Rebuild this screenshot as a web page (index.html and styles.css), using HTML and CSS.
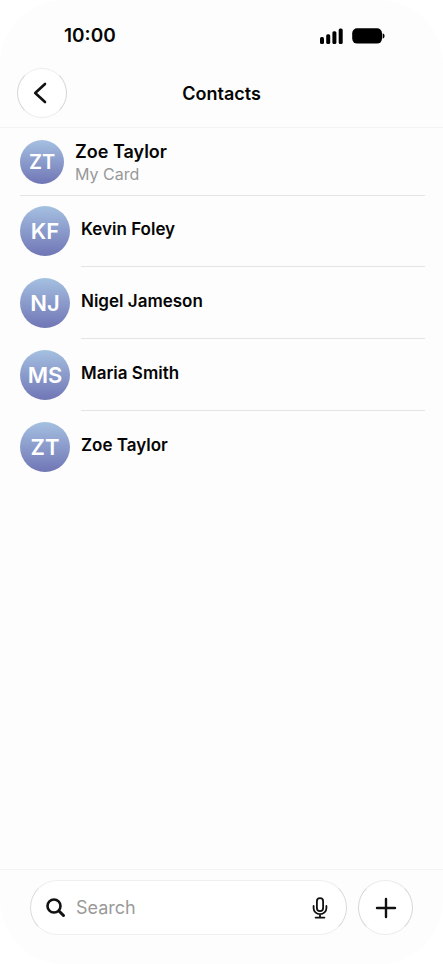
FILE: index.html
```html
<!DOCTYPE html>
<html lang="en">
<head>
<meta charset="utf-8">
<meta name="viewport" content="width=device-width, initial-scale=1">
<title>Contacts</title>
<link rel="stylesheet" href="styles.css">
</head>
<body>
<div class="screen">
  <header class="top">
    <div class="status">
      <time class="clock">10:00</time>
      <div class="status-icons">
        <svg width="24" height="16" viewBox="0 0 24 16" aria-hidden="true">
          <rect x="0" y="9" width="4" height="7" rx="1.5"/>
          <rect x="6.2" y="6.2" width="4" height="9.8" rx="1.5"/>
          <rect x="12.4" y="3.2" width="4" height="12.8" rx="1.5"/>
          <rect x="18.7" y="0.4" width="4" height="15.6" rx="1.5"/>
        </svg>
        <svg width="33" height="16" viewBox="0 0 33 16" aria-hidden="true">
          <rect x="0.2" y="0.2" width="29.8" height="15.4" rx="5"/>
          <path d="M30.6 5.2c2.6.8 2.6 4.6 0 5.4z"/>
        </svg>
      </div>
    </div>
    <div class="nav">
      <button class="round back" aria-label="Back">
        <svg width="14" height="22" viewBox="0 0 14 22" aria-hidden="true"><path d="M12 2 2.2 11l9.8 9"/></svg>
      </button>
      <h1>Contacts</h1>
    </div>
  </header>
  <main>
    <section class="my-card">
      <span class="avatar small">ZT</span>
      <div>
        <h2>Zoe Taylor</h2>
        <p>My Card</p>
      </div>
    </section>
    <ul class="contacts">
      <li><span class="avatar">KF</span><span class="name">Kevin Foley</span></li>
      <li><span class="avatar">NJ</span><span class="name">Nigel Jameson</span></li>
      <li><span class="avatar">MS</span><span class="name">Maria Smith</span></li>
      <li><span class="avatar">ZT</span><span class="name">Zoe Taylor</span></li>
    </ul>
  </main>
  <footer class="toolbar">
    <div class="search">
      <svg width="20" height="20" viewBox="0 0 20 20" aria-hidden="true"><circle cx="8" cy="8" r="6.5"/><path class="handle" d="m13 13 4.5 4.5"/></svg>
      <input type="text" placeholder="Search" aria-label="Search">
      <button class="mic" aria-label="Dictate">
        <svg width="16" height="22" viewBox="0 0 16 22" aria-hidden="true"><rect x="4.9" y="1.2" width="6.2" height="13" rx="3.1"/><path d="M1.6 9v2.2a6.4 6 0 0 0 12.8 0V9M8 17.2v3.2M3.6 20.6h8.8"/></svg>
      </button>
    </div>
    <button class="round add" aria-label="Add contact">
      <svg width="22" height="22" viewBox="0 0 22 22" aria-hidden="true"><path d="M11 2v18M2 11h18"/></svg>
    </button>
  </footer>
</div>
</body>
</html>
```
FILE: styles.css
```css
* { box-sizing: border-box; }
body {
  margin: 0;
  background: #fff;
  color: #050505;
  font-family: Inter, "Liberation Sans", sans-serif;
}
h1, h2, p, ul { margin: 0; padding: 0; }
button, input { border: 0; padding: 0; background: none; font: inherit; color: inherit; }
svg { display: block; flex: none; }

.screen {
  min-height: 100vh;
  display: flex;
  flex-direction: column;
  background: #fdfdfd;
  border-radius: 64px;
}
.top { border-bottom: 1px solid #f3f3f3; }
.status {
  display: flex;
  justify-content: space-between;
  align-items: center;
  padding: 24px 58px 0 64px;
  height: 48px;
}
.clock { font-size: 19px; line-height: 24px; font-weight: 600; }
.status-icons { display: flex; gap: 8px; fill: #000; }
.nav {
  display: grid;
  grid-template-columns: 50px 1fr 50px;
  align-items: center;
  padding: 20px 17px 9px;
}
h1 { font-size: 18px; line-height: 24px; font-weight: 600; text-align: center; padding-top: 2px; }
.round {
  display: flex;
  align-items: center;
  justify-content: center;
  flex: none;
  border: 1px solid;
  border-color: #ececec #d6d6d6;
  border-radius: 50%;
  background: #fff;
}
.back { width: 50px; height: 50px; padding-right: 4px; }
.back svg, .add svg, .search svg {
  fill: none;
  stroke: #111;
  stroke-width: 2.6;
  stroke-linecap: round;
  stroke-linejoin: round;
}

main { flex: 1; padding: 0 18px 0 20px; }
.my-card {
  display: flex;
  align-items: center;
  gap: 11px;
  height: 68px;
  border-bottom: 1px solid #e4e4e5;
}
h2 { font-size: 18px; line-height: 24px; font-weight: 600; }
.my-card p { font-size: 16px; line-height: 20px; color: #98989a; }
.avatar {
  display: flex;
  align-items: center;
  justify-content: center;
  flex: none;
  width: 50px;
  height: 50px;
  border-radius: 50%;
  background: linear-gradient(#a5c0e1, #7076b5);
  color: #fff;
  font-size: 22px;
  font-weight: 600;
}
.small { width: 44px; height: 44px; font-size: 20px; }
.contacts { display: flex; flex-direction: column; gap: 1px; list-style: none; }
.contacts li { display: flex; gap: 11px; }
.contacts .avatar { margin: 10px 0 11px; }
.name {
  flex: 1;
  display: flex;
  align-items: center;
  padding-bottom: 4px;
  border-bottom: 1px solid #e4e4e5;
  font-size: 17px;
  font-weight: 600;
}
.contacts li:last-child .name { border-color: transparent; }

.toolbar {
  display: flex;
  gap: 11px;
  padding: 10px 30px 29px;
  border-top: 1px solid #f3f3f3;
}
.search {
  flex: 1;
  min-width: 0;
  display: flex;
  align-items: center;
  gap: 10px;
  height: 55px;
  padding: 0 18px 0 15px;
  border: 1px solid;
  border-color: #efefef #dadada;
  border-radius: 28px;
  background: #fff;
}
.search input { flex: 1; min-width: 0; font-size: 18px; line-height: 24px; outline: 0; }
.search input::placeholder { color: #9a9a9a; opacity: 1; }
.search .handle { stroke-width: 3; }
.search .mic svg { stroke-width: 1.8; }
.add { width: 55px; height: 55px; }
.add svg { stroke-width: 2.4; }
```
